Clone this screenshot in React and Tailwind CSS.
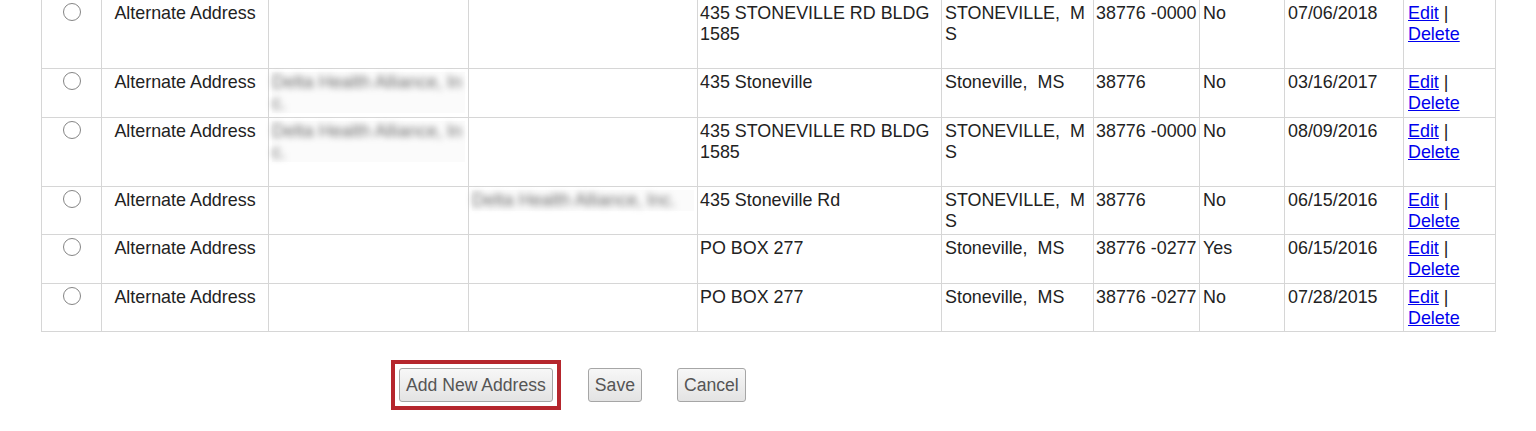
import React from "react";

const cols = [60, 167, 200, 229, 244, 152, 106, 85, 119, 92];

const rows = [
  { h: 69, c3: null, c4: null, addr: ["435 STONEVILLE RD BLDG", "1585"], city: ["STONEVILLE,\u00a0\u00a0M", "S"], zip: "38776 -0000", prim: "No", date: "07/06/2018" },
  { h: 49, c3: ["Delta Health Alliance, In", "c."], c4: null, addr: ["435 Stoneville"], city: ["Stoneville,\u00a0\u00a0MS"], zip: "38776", prim: "No", date: "03/16/2017" },
  { h: 69, c3: ["Delta Health Alliance, In", "c."], c4: null, addr: ["435 STONEVILLE RD BLDG", "1585"], city: ["STONEVILLE,\u00a0\u00a0M", "S"], zip: "38776 -0000", prim: "No", date: "08/09/2016" },
  { h: 48, c3: null, c4: ["Delta Health Alliance, Inc."], addr: ["435 Stoneville Rd"], city: ["STONEVILLE,\u00a0\u00a0M", "S"], zip: "38776", prim: "No", date: "06/15/2016" },
  { h: 49, c3: null, c4: null, addr: ["PO BOX 277"], city: ["Stoneville,\u00a0\u00a0MS"], zip: "38776 -0277", prim: "Yes", date: "06/15/2016" },
  { h: 48, c3: null, c4: null, addr: ["PO BOX 277"], city: ["Stoneville,\u00a0\u00a0MS"], zip: "38776 -0277", prim: "No", date: "07/28/2015" },
];

function Lines({ lines }) {
  return lines.map((l, i) => <div key={i} className="whitespace-nowrap">{l}</div>);
}

function Blurred({ lines }) {
  return (
    <div className="bg-[#fbfbfb] pr-[4px]">
      <div className="blur-[3px] text-[#6f6f6f]">
        <Lines lines={lines} />
      </div>
    </div>
  );
}

function Cell({ w, children, className = "" }) {
  return (
    <div
      className={"shrink-0 border-r border-[#d6d6d6] px-[3px] pt-[3px] " + className}
      style={{ width: w }}
    >
      {children}
    </div>
  );
}

function Btn({ children }) {
  return (
    <button className="h-[34px] px-[6px] rounded-[3px] border border-[#a6a6a6] bg-gradient-to-b from-[#f7f7f7] to-[#e3e3e3] text-[#555] text-[17.6px] leading-[20px]">
      {children}
    </button>
  );
}

export default function App() {
  return (
    <div className="w-[1536px] h-[431px] bg-white overflow-hidden text-[#222] text-[17.9px] leading-[20.5px]" style={{ fontFamily: '"Liberation Sans", Arial, sans-serif' }}>
      <div className="ml-[41px] w-[1455px] border-l border-[#d6d6d6]">
        {rows.map((r, i) => (
          <div key={i} className="flex border-b border-[#d6d6d6]" style={{ height: r.h }}>
            <Cell w={cols[0]} className="flex justify-center pt-[3px]">
              <span className="block w-[18px] h-[18px] rounded-full border-[1.5px] border-[#858585] bg-white" />
            </Cell>
            <Cell w={cols[1]} className="text-center px-0">Alternate Address</Cell>
            <Cell w={cols[2]} className="px-[1px]">{r.c3 && <Blurred lines={r.c3} />}</Cell>
            <Cell w={cols[3]} className="px-[1px]">{r.c4 && <Blurred lines={r.c4} />}</Cell>
            <Cell w={cols[4]} className="pl-[2px]"><Lines lines={r.addr} /></Cell>
            <Cell w={cols[5]}><Lines lines={r.city} /></Cell>
            <Cell w={cols[6]} className="whitespace-nowrap pl-[2px]">{r.zip}</Cell>
            <Cell w={cols[7]}>{r.prim}</Cell>
            <Cell w={cols[8]}>{r.date}</Cell>
            <Cell w={cols[9]} className="pl-[4px]">
              <div>
                <a href="#" className="text-[#0000ee] underline">Edit</a> |
              </div>
              <div>
                <a href="#" className="text-[#0000ee] underline">Delete</a>
              </div>
            </Cell>
          </div>
        ))}
      </div>
      <div className="flex items-center mt-[28px] ml-[391px]">
        <div className="border-[4px] border-[#b5262d] p-[4px]">
          <Btn>Add New Address</Btn>
        </div>
        <div className="ml-[27px]">
          <Btn>Save</Btn>
        </div>
        <div className="ml-[35px]">
          <Btn>Cancel</Btn>
        </div>
      </div>
    </div>
  );
}
